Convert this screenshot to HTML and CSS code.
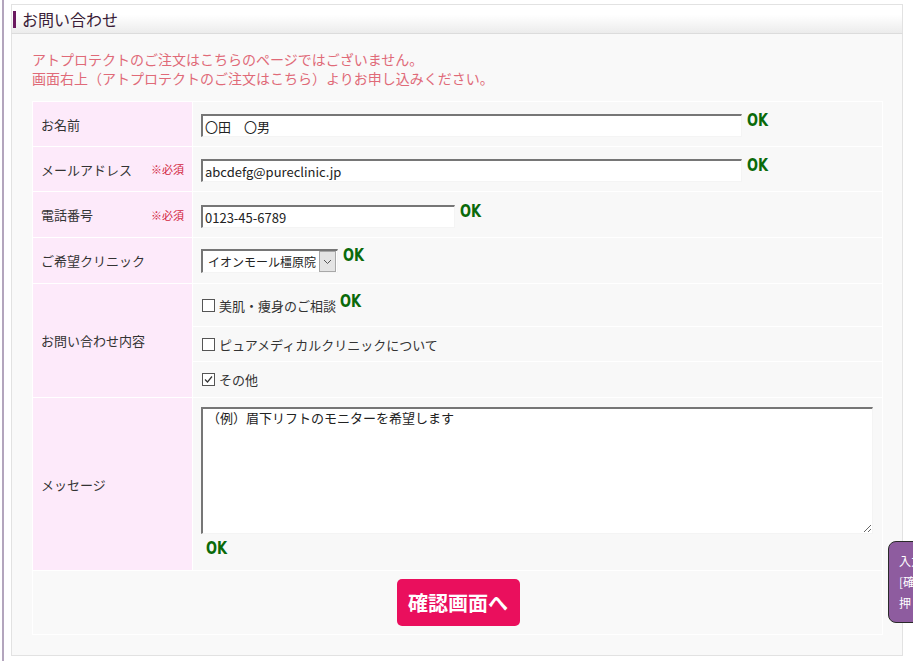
FILE: index.html
```html
<!DOCTYPE html>
<html lang="ja">
<head>
<meta charset="utf-8">
<title>お問い合わせ</title>
<link rel="stylesheet" href="styles.css">
</head>
<body>
<div class="page">
  <div class="head"><span class="head-bar"></span><h1 class="head-title">お問い合わせ</h1></div>
  <div class="box">
    <p class="notice">アトプロテクトのご注文はこちらのページではございません。<br>画面右上（アトプロテクトのご注文はこちら）よりお申し込みください。</p>
    <table class="form">
      <colgroup><col class="col-lbl"><col class="col-val"></colgroup>
      <tr class="r1">
        <th class="lbl">お名前</th>
        <td class="val"><span class="field"><input class="inp inp-long" type="text" value="〇田　〇男"><span class="ok">OK</span></span></td>
      </tr>
      <tr class="r1">
        <th class="lbl"><span class="lbl-in">メールアドレス<span class="req">※必須</span></span></th>
        <td class="val"><span class="field"><input class="inp inp-long" type="text" value="abcdefg@pureclinic.jp"><span class="ok">OK</span></span></td>
      </tr>
      <tr class="r2">
        <th class="lbl"><span class="lbl-in">電話番号<span class="req">※必須</span></span></th>
        <td class="val val-tel"><span class="field"><input class="inp inp-tel" type="text" value="0123-45-6789"><span class="ok">OK</span></span></td>
      </tr>
      <tr class="r2">
        <th class="lbl">ご希望クリニック</th>
        <td class="val val-sel"><span class="field"><span class="sel"><span class="sel-text">イオンモール橿原院</span><span class="sel-arrow"><svg width="9" height="6" viewBox="0 0 9 6"><path d="M1 1 L4.5 4.5 L8 1" fill="none" stroke="#555" stroke-width="1"/></svg></span></span><span class="ok">OK</span></span></td>
      </tr>
      <tr class="rc1">
        <th class="lbl" rowspan="3">お問い合わせ内容</th>
        <td class="val val-chk"><span class="chk-row"><span class="chk"><span class="cb"></span>美肌・痩身のご相談</span><span class="ok ok-chk">OK</span></span></td>
      </tr>
      <tr class="rc2">
        <td class="val val-chk"><span class="chk-row"><span class="chk"><span class="cb"></span>ピュアメディカルクリニックについて</span></span></td>
      </tr>
      <tr class="rc3">
        <td class="val val-chk"><span class="chk-row"><span class="chk"><span class="cb"><svg width="11" height="11" viewBox="0 0 11 11"><path d="M2 5.5 L4.5 8 L9 2.5" fill="none" stroke="#333" stroke-width="1.2"/></svg></span>その他</span></span></td>
      </tr>
      <tr class="rm">
        <th class="lbl">メッセージ</th>
        <td class="val val-msg"><textarea class="ta">（例）眉下リフトのモニターを希望します</textarea><span class="ok ok-msg">OK</span></td>
      </tr>
      <tr class="rs">
        <td class="submit" colspan="2"><button class="btn" type="button">確認画面へ</button></td>
      </tr>
    </table>
  </div>
</div>
<div class="tip">入力が完了したら<br>[確認画面へ]ボタンを<br>押してください</div>
</body>
</html>
```
FILE: styles.css
```css
html, body {
  margin: 0;
  padding: 0;
}
body {
  background: linear-gradient(to right, #fff 2px, #b3a5bd 2px, #b3a5bd 4px, #fff 4px);
  font-family: "Noto Sans CJK JP", "Noto Sans", sans-serif;
  color: #333;
  overflow: hidden;
  height: 661px;
}
.page {
  width: 892px;
  margin: 4px 0 0 11px;
}
.head {
  display: flex;
  align-items: center;
  box-sizing: border-box;
  height: 30px;
  border: 1px solid #e2e2e2;
  border-bottom-color: #dcdcdc;
  background: linear-gradient(to bottom, #ffffff 0%, #ffffff 35%, #ececec 100%);
}
.head-bar {
  width: 3px;
  height: 17px;
  background: #6b1a60;
  margin-left: 1px;
}
.head-title {
  margin: 0 0 0 6px;
  font-size: 16px;
  font-weight: normal;
  color: #3a1c37;
  line-height: 20px;
}
.box {
  background: #f9f9f9;
  border: 1px solid #e2e2e2;
  border-top: none;
  padding: 16px 19px 20px 20px;
}
.notice {
  margin: 0 0 13px;
  font-size: 14px;
  line-height: 19px;
  color: #e06a78;
}
.form {
  width: 850px;
  border-collapse: separate;
  border-spacing: 1px;
  background: #fff;
  table-layout: fixed;
}
.col-lbl { width: 159px; }
.col-val { width: 689px; }
.lbl {
  background: #fdeafa;
  font-weight: normal;
  text-align: left;
  vertical-align: middle;
  font-size: 13px;
  color: #333;
  padding: 0 8px;
  white-space: nowrap;
}
.lbl-in {
  display: flex;
  justify-content: space-between;
  align-items: center;
}
.req {
  font-size: 11px;
  color: #d21f40;
}
.val {
  background: #f8f8f8;
  padding: 12px 8px 0;
  vertical-align: top;
  font-size: 13px;
}
.r1 .val, .r1 .lbl { height: 44px; box-sizing: border-box; }
.r2 .val, .r2 .lbl { height: 45px; box-sizing: border-box; }
.val-tel { padding-top: 13px; }
.val-sel { padding-top: 11px; }
.field {
  display: flex;
  align-items: flex-start;
}
.inp {
  box-sizing: border-box;
  height: 23px;
  border-style: solid;
  border-width: 2px 1px 1px 2px;
  border-color: #767676 #f4f4f4 #f4f4f4 #767676;
  background: #fff;
  font-family: "Noto Sans CJK JP", "Noto Sans", sans-serif;
  font-size: 13px;
  color: #222;
  padding: 0 2px;
  margin: 0;
  outline: none;
}
.inp-long { width: 541px; }
.inp-tel { width: 254px; }
.ok {
  display: inline-block;
  font-family: "DejaVu Sans Condensed", "DejaVu Sans", sans-serif;
  font-stretch: condensed;
  font-weight: bold;
  font-size: 18px;
  line-height: 16px;
  color: #0a6a0a;
  margin-left: 5px;
  margin-top: -2px;
  transform: scaleX(0.8);
  transform-origin: left center;
}
.sel {
  display: flex;
  align-items: center;
  box-sizing: border-box;
  width: 137px;
  height: 24px;
  border-style: solid;
  border-width: 2px 1px 1px 2px;
  border-color: #767676 #f4f4f4 #f4f4f4 #767676;
  background: #fff;
}
.sel-text {
  flex: 1;
  padding-left: 5px;
  font-size: 12px;
  color: #222;
  white-space: nowrap;
}
.sel-arrow {
  display: flex;
  align-items: center;
  justify-content: center;
  flex: none;
  width: 15px;
  height: 19px;
  background: #e4e4e4;
  border: 1px solid #a8a8a8;
  margin-right: 1px;
}
.rc1 .val { height: 42px; }
.rc2 .val { height: 34px; }
.rc3 .val { height: 35px; }
.val-chk {
  vertical-align: middle;
  padding: 0 8px 0 9px;
  box-sizing: border-box;
}
.chk-row {
  display: flex;
  align-items: center;
}
.chk {
  display: inline-flex;
  align-items: center;
  gap: 4px;
  font-size: 13px;
  color: #333;
}
.cb {
  display: inline-flex;
  align-items: center;
  justify-content: center;
  box-sizing: border-box;
  width: 13px;
  height: 13px;
  border: 1px solid #555;
  background: #fff;
}
.ok-chk {
  margin-left: 4px;
  margin-top: -8px;
}
.rm .val, .rm .lbl { height: 172px; box-sizing: border-box; }
.val-msg { padding-top: 9px; }
.ta {
  display: block;
  box-sizing: border-box;
  width: 672px;
  height: 127px;
  margin: 0;
  border-style: solid;
  border-width: 2px 1px 1px 2px;
  border-color: #767676 #f4f4f4 #f4f4f4 #767676;
  background: #fff;
  font-family: "Noto Sans CJK JP", "Noto Sans", sans-serif;
  font-size: 13px;
  line-height: 17px;
  color: #222;
  padding: 0 4px;
  outline: none;
}
.ok-msg {
  display: block;
  margin: 6px 0 0 5px;
}
.submit {
  background: #f9f9f9;
  height: 63px;
  text-align: center;
  vertical-align: middle;
  padding: 0;
}
.btn {
  width: 123px;
  height: 47px;
  border: none;
  border-radius: 5px;
  background: #ea0f5d;
  color: #fff;
  font-family: "Noto Sans CJK JP", "Noto Sans", sans-serif;
  font-weight: bold;
  font-size: 20px;
  padding: 0;
  margin-left: 1px;
}
.tip {
  position: fixed;
  left: 888px;
  top: 541px;
  width: 140px;
  height: 82px;
  box-sizing: border-box;
  border: 1px solid #2a2a2a;
  border-radius: 8px;
  background: #8e5c9f;
  color: #fff;
  font-size: 12px;
  line-height: 21px;
  padding: 8px 10px;
  white-space: nowrap;
}
```
